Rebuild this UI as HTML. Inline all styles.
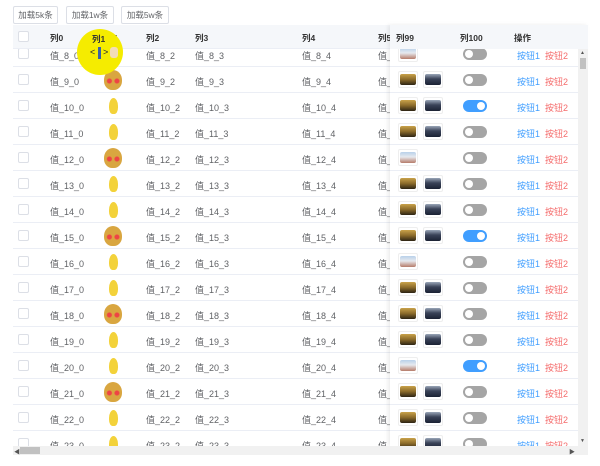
<!DOCTYPE html>
<html><head><meta charset="utf-8"><style>
*{margin:0;padding:0;box-sizing:border-box}
body{width:600px;height:466px;background:#fff;position:relative;overflow:hidden;font-family:"Liberation Sans","Noto Sans CJK SC",sans-serif;font-size:9px;color:#606266}
.btn{position:absolute;top:6px;height:18px;border:1px solid #dcdfe6;border-radius:2px;font-size:8.5px;line-height:16px;text-align:center;color:#606266;background:#fff}
.hd{position:absolute;left:13px;top:25px;width:575px;height:24px;background:#f5f7fa;border-bottom:1px solid #ebeef5}
.hd span{position:absolute;top:7px;font-weight:bold;color:#333;font-size:8.5px}
.body{position:absolute;left:13px;top:49px;width:565px;height:397px;overflow:hidden}
.r{position:absolute;left:0;width:565px;height:26px;border-bottom:1px solid #ebeef5}
.r span{position:absolute;top:8px;white-space:nowrap}
.cb{position:absolute;left:5px;top:7px;width:11px;height:11px;border:1px solid #dcdfe6;border-radius:2px;background:#fff}
.hd .cb{top:6px}
.big{position:absolute;left:91px;top:3px;width:18px;height:20px;border-radius:50% 50% 45% 45%;background:radial-gradient(circle at 30% 55%,#e44 0 2px,transparent 3px),radial-gradient(circle at 72% 55%,#e44 0 2px,transparent 3px),#d9a640}
.sm{position:absolute;left:96px;top:5px;width:9px;height:16px;border-radius:50% 50% 40% 40%;background:#f3d23a}
.fx{position:absolute;left:377px;top:0;width:188px;height:397px;background:#fff;box-shadow:-2px 0 4px rgba(0,0,0,.08)}
.fx .r{width:188px}
.p{position:absolute;top:4px;width:20px;height:17px;border:1px solid #eee;border-radius:2px;padding:2px 1px}
.p i{display:block;width:100%;height:100%;border-radius:2px}
.g i{background:linear-gradient(#c9a24a 0,#8a6a2a 50%,#2d2414 100%)}
.d i{background:linear-gradient(#9aa6b8 0,#3a4358 45%,#1b2234 100%)}
.l i{background:linear-gradient(#b8d0ea 0,#e6e9ee 45%,#b67c6a 100%)}
.sw{position:absolute;left:73px;top:7px;width:24px;height:12px;border-radius:6px;background:#a5a5a5}
.sw:after{content:"";position:absolute;left:2px;top:2px;width:8px;height:8px;border-radius:50%;background:#fff}
.sw.on{background:#409eff}.sw.on:after{left:14px}
.b1{color:#409eff}.b2{color:#f56c6c}
</style></head><body>
<div class="btn" style="left:13px;width:45px">加载5k条</div>
<div class="btn" style="left:66px;width:48px">加载1w条</div>
<div class="btn" style="left:121px;width:48px">加载5w条</div>
<div class="hd"><i class="cb"></i><span style="left:37px">列0</span><span style="left:92px">列1</span><span style="left:133px">列2</span><span style="left:182px">列3</span><span style="left:289px">列4</span><span style="left:365px">列5</span>
<div style="position:absolute;left:377px;top:0;width:198px;height:24px;background:#f5f7fa;box-shadow:-2px 0 4px rgba(0,0,0,.08)"><span style="left:6px">列99</span><span style="left:70px">列100</span><span style="left:124px">操作</span></div></div>
<div class="body">
<div class="r" style="top:-8px"><i class="cb"></i><span style="left:37px">值_8_0</span><b class="sm"></b><span style="left:133px">值_8_2</span><span style="left:182px">值_8_3</span><span style="left:289px">值_8_4</span><span style="left:365px">值_</span></div>
<div class="r" style="top:18px"><i class="cb"></i><span style="left:37px">值_9_0</span><b class="big"></b><span style="left:133px">值_9_2</span><span style="left:182px">值_9_3</span><span style="left:289px">值_9_4</span><span style="left:365px">值_</span></div>
<div class="r" style="top:44px"><i class="cb"></i><span style="left:37px">值_10_0</span><b class="sm"></b><span style="left:133px">值_10_2</span><span style="left:182px">值_10_3</span><span style="left:289px">值_10_4</span><span style="left:365px">值_</span></div>
<div class="r" style="top:70px"><i class="cb"></i><span style="left:37px">值_11_0</span><b class="sm"></b><span style="left:133px">值_11_2</span><span style="left:182px">值_11_3</span><span style="left:289px">值_11_4</span><span style="left:365px">值_</span></div>
<div class="r" style="top:96px"><i class="cb"></i><span style="left:37px">值_12_0</span><b class="big"></b><span style="left:133px">值_12_2</span><span style="left:182px">值_12_3</span><span style="left:289px">值_12_4</span><span style="left:365px">值_</span></div>
<div class="r" style="top:122px"><i class="cb"></i><span style="left:37px">值_13_0</span><b class="sm"></b><span style="left:133px">值_13_2</span><span style="left:182px">值_13_3</span><span style="left:289px">值_13_4</span><span style="left:365px">值_</span></div>
<div class="r" style="top:148px"><i class="cb"></i><span style="left:37px">值_14_0</span><b class="sm"></b><span style="left:133px">值_14_2</span><span style="left:182px">值_14_3</span><span style="left:289px">值_14_4</span><span style="left:365px">值_</span></div>
<div class="r" style="top:174px"><i class="cb"></i><span style="left:37px">值_15_0</span><b class="big"></b><span style="left:133px">值_15_2</span><span style="left:182px">值_15_3</span><span style="left:289px">值_15_4</span><span style="left:365px">值_</span></div>
<div class="r" style="top:200px"><i class="cb"></i><span style="left:37px">值_16_0</span><b class="sm"></b><span style="left:133px">值_16_2</span><span style="left:182px">值_16_3</span><span style="left:289px">值_16_4</span><span style="left:365px">值_</span></div>
<div class="r" style="top:226px"><i class="cb"></i><span style="left:37px">值_17_0</span><b class="sm"></b><span style="left:133px">值_17_2</span><span style="left:182px">值_17_3</span><span style="left:289px">值_17_4</span><span style="left:365px">值_</span></div>
<div class="r" style="top:252px"><i class="cb"></i><span style="left:37px">值_18_0</span><b class="big"></b><span style="left:133px">值_18_2</span><span style="left:182px">值_18_3</span><span style="left:289px">值_18_4</span><span style="left:365px">值_</span></div>
<div class="r" style="top:278px"><i class="cb"></i><span style="left:37px">值_19_0</span><b class="sm"></b><span style="left:133px">值_19_2</span><span style="left:182px">值_19_3</span><span style="left:289px">值_19_4</span><span style="left:365px">值_</span></div>
<div class="r" style="top:304px"><i class="cb"></i><span style="left:37px">值_20_0</span><b class="sm"></b><span style="left:133px">值_20_2</span><span style="left:182px">值_20_3</span><span style="left:289px">值_20_4</span><span style="left:365px">值_</span></div>
<div class="r" style="top:330px"><i class="cb"></i><span style="left:37px">值_21_0</span><b class="big"></b><span style="left:133px">值_21_2</span><span style="left:182px">值_21_3</span><span style="left:289px">值_21_4</span><span style="left:365px">值_</span></div>
<div class="r" style="top:356px"><i class="cb"></i><span style="left:37px">值_22_0</span><b class="sm"></b><span style="left:133px">值_22_2</span><span style="left:182px">值_22_3</span><span style="left:289px">值_22_4</span><span style="left:365px">值_</span></div>
<div class="r" style="top:382px"><i class="cb"></i><span style="left:37px">值_23_0</span><b class="sm"></b><span style="left:133px">值_23_2</span><span style="left:182px">值_23_3</span><span style="left:289px">值_23_4</span><span style="left:365px">值_</span></div>
<div class="fx">
<div class="r" style="top:-8px"><b class="p l" style="left:8px"><i></i></b><b class="sw"></b><span class="b1" style="left:127px">按钮1</span><span class="b2" style="left:155px">按钮2</span></div>
<div class="r" style="top:18px"><b class="p g" style="left:8px"><i></i></b><b class="p d" style="left:33px"><i></i></b><b class="sw"></b><span class="b1" style="left:127px">按钮1</span><span class="b2" style="left:155px">按钮2</span></div>
<div class="r" style="top:44px"><b class="p g" style="left:8px"><i></i></b><b class="p d" style="left:33px"><i></i></b><b class="sw on"></b><span class="b1" style="left:127px">按钮1</span><span class="b2" style="left:155px">按钮2</span></div>
<div class="r" style="top:70px"><b class="p g" style="left:8px"><i></i></b><b class="p d" style="left:33px"><i></i></b><b class="sw"></b><span class="b1" style="left:127px">按钮1</span><span class="b2" style="left:155px">按钮2</span></div>
<div class="r" style="top:96px"><b class="p l" style="left:8px"><i></i></b><b class="sw"></b><span class="b1" style="left:127px">按钮1</span><span class="b2" style="left:155px">按钮2</span></div>
<div class="r" style="top:122px"><b class="p g" style="left:8px"><i></i></b><b class="p d" style="left:33px"><i></i></b><b class="sw"></b><span class="b1" style="left:127px">按钮1</span><span class="b2" style="left:155px">按钮2</span></div>
<div class="r" style="top:148px"><b class="p g" style="left:8px"><i></i></b><b class="p d" style="left:33px"><i></i></b><b class="sw"></b><span class="b1" style="left:127px">按钮1</span><span class="b2" style="left:155px">按钮2</span></div>
<div class="r" style="top:174px"><b class="p g" style="left:8px"><i></i></b><b class="p d" style="left:33px"><i></i></b><b class="sw on"></b><span class="b1" style="left:127px">按钮1</span><span class="b2" style="left:155px">按钮2</span></div>
<div class="r" style="top:200px"><b class="p l" style="left:8px"><i></i></b><b class="sw"></b><span class="b1" style="left:127px">按钮1</span><span class="b2" style="left:155px">按钮2</span></div>
<div class="r" style="top:226px"><b class="p g" style="left:8px"><i></i></b><b class="p d" style="left:33px"><i></i></b><b class="sw"></b><span class="b1" style="left:127px">按钮1</span><span class="b2" style="left:155px">按钮2</span></div>
<div class="r" style="top:252px"><b class="p g" style="left:8px"><i></i></b><b class="p d" style="left:33px"><i></i></b><b class="sw"></b><span class="b1" style="left:127px">按钮1</span><span class="b2" style="left:155px">按钮2</span></div>
<div class="r" style="top:278px"><b class="p g" style="left:8px"><i></i></b><b class="p d" style="left:33px"><i></i></b><b class="sw"></b><span class="b1" style="left:127px">按钮1</span><span class="b2" style="left:155px">按钮2</span></div>
<div class="r" style="top:304px"><b class="p l" style="left:8px"><i></i></b><b class="sw on"></b><span class="b1" style="left:127px">按钮1</span><span class="b2" style="left:155px">按钮2</span></div>
<div class="r" style="top:330px"><b class="p g" style="left:8px"><i></i></b><b class="p d" style="left:33px"><i></i></b><b class="sw"></b><span class="b1" style="left:127px">按钮1</span><span class="b2" style="left:155px">按钮2</span></div>
<div class="r" style="top:356px"><b class="p g" style="left:8px"><i></i></b><b class="p d" style="left:33px"><i></i></b><b class="sw"></b><span class="b1" style="left:127px">按钮1</span><span class="b2" style="left:155px">按钮2</span></div>
<div class="r" style="top:382px"><b class="p g" style="left:8px"><i></i></b><b class="p d" style="left:33px"><i></i></b><b class="sw"></b><span class="b1" style="left:127px">按钮1</span><span class="b2" style="left:155px">按钮2</span></div>
</div>
</div>
<!-- vertical scrollbar -->
<div style="position:absolute;left:578px;top:49px;width:10px;height:397px;background:#f1f1f1"></div>
<div style="position:absolute;left:580px;top:50px;font-size:5px;color:#555">▲</div>
<div style="position:absolute;left:580px;top:58px;width:6px;height:11px;background:#c1c1c1"></div>
<div style="position:absolute;left:580px;top:438px;font-size:5px;color:#555">▼</div>
<!-- horizontal scrollbar -->
<div style="position:absolute;left:13px;top:446px;width:575px;height:9px;background:#f1f1f1"></div>
<div style="position:absolute;left:14px;top:447px;font-size:6px;color:#555">◀</div>
<div style="position:absolute;left:20px;top:447px;width:20px;height:7px;background:#c1c1c1"></div>
<div style="position:absolute;left:569px;top:447px;font-size:6px;color:#555">▶</div>
<!-- yellow cursor circle -->
<div style="position:absolute;left:77px;top:29px;width:46px;height:46px;border-radius:50%;background:#f5ec00"></div>
<div style="position:absolute;left:92px;top:33px;font-size:8.5px;font-weight:bold;color:#333">列1</div>
<div style="position:absolute;left:98px;top:47px;width:3px;height:12px;background:#3a5fa8"></div>
<div style="position:absolute;left:90px;top:47px;font-size:9px;color:#223">&lt;</div>
<div style="position:absolute;left:103px;top:47px;font-size:9px;color:#223">&gt;</div>
<div style="position:absolute;left:110px;top:47px;width:8px;height:11px;border-radius:3px;background:#f3dcb8"></div>
</body></html>
